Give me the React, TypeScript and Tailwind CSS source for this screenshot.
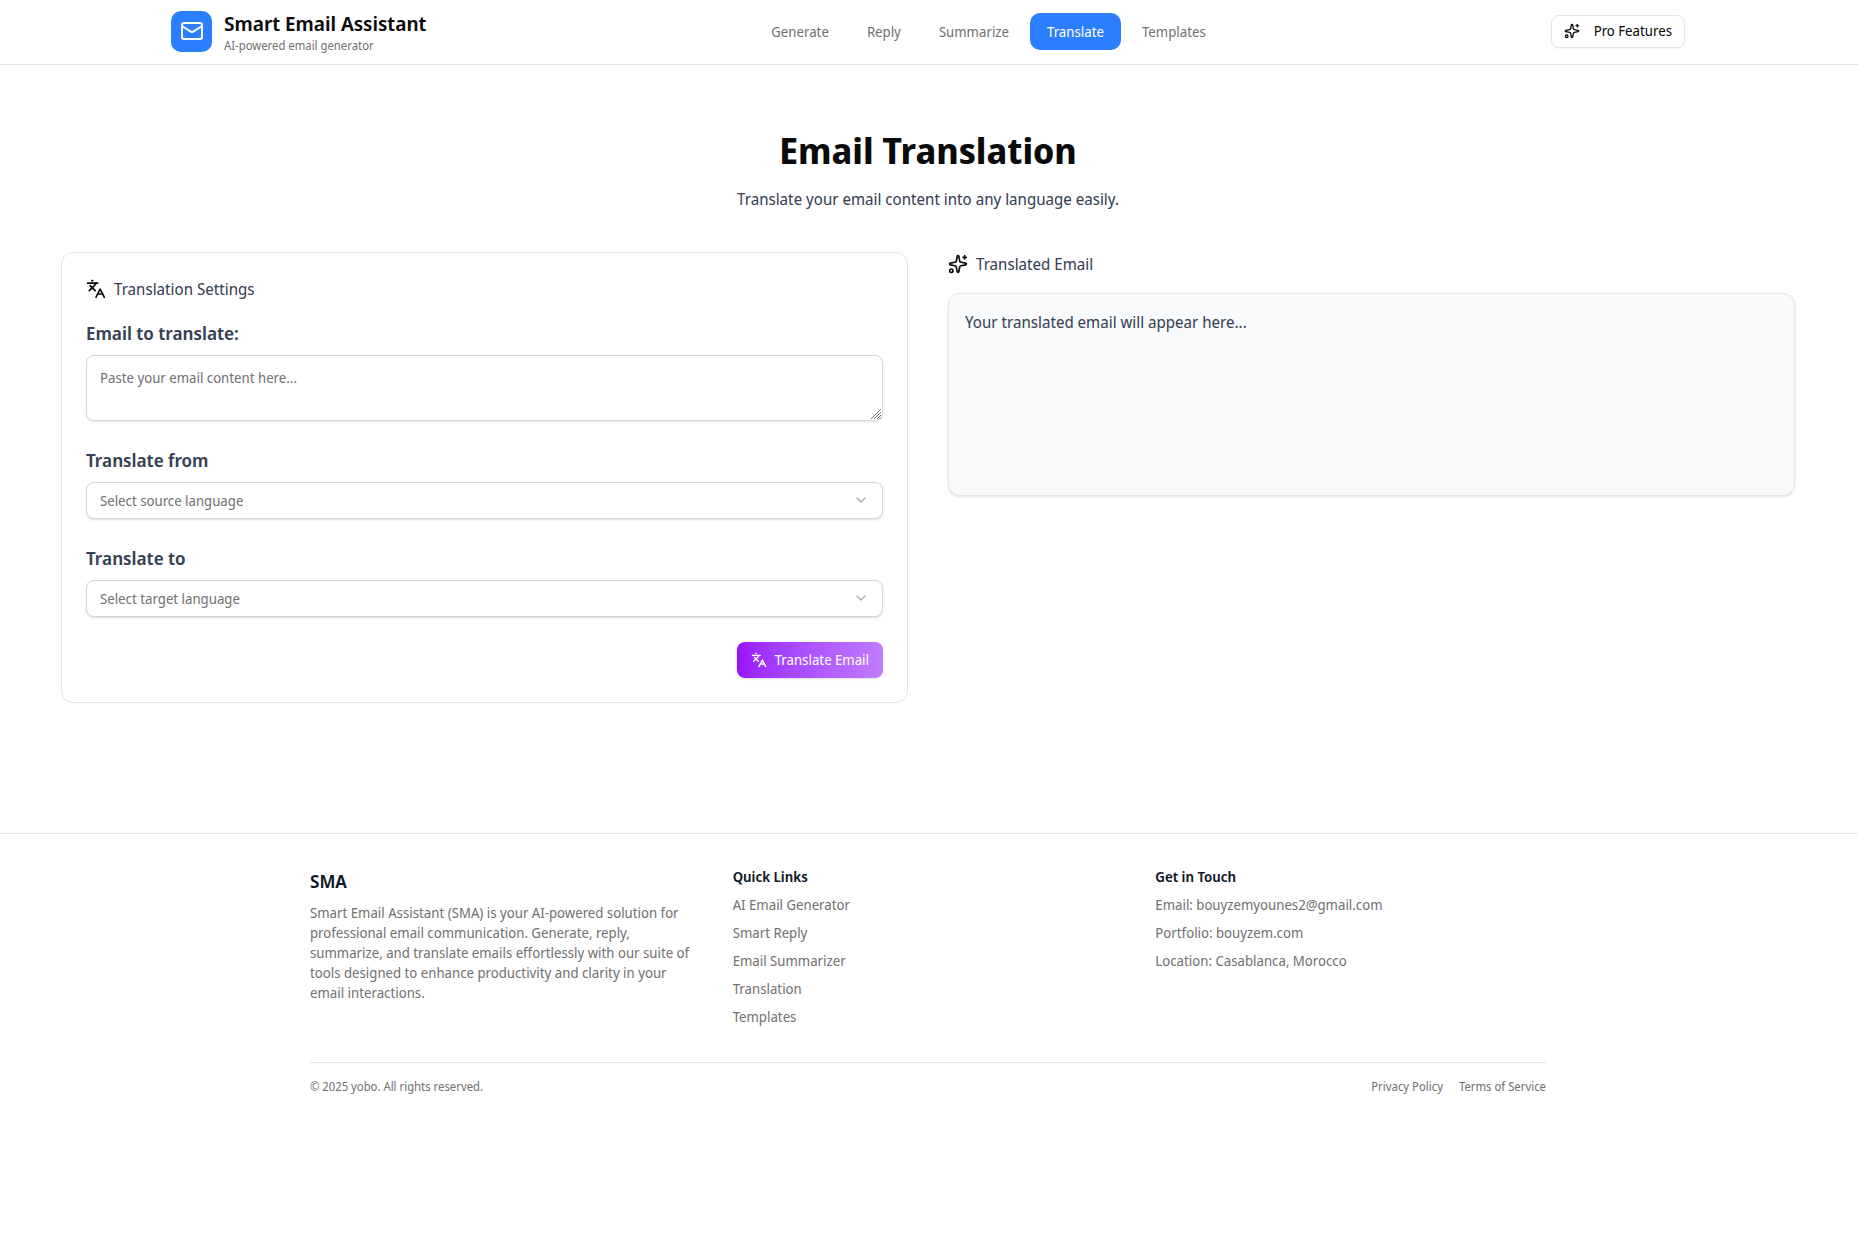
import { ChevronDown, Languages, Mail, Sparkles } from "lucide-react";

const tabs = ["Generate", "Reply", "Summarize", "Translate", "Templates"];
const quickLinks = ["AI Email Generator", "Smart Reply", "Email Summarizer", "Translation", "Templates"];
const contacts = ["Email: bouyzemyounes2@gmail.com", "Portfolio: bouyzem.com", "Location: Casablanca, Morocco"];
const languages = ["English", "French", "Spanish", "German", "Arabic"];

function LanguageSelect({ id, label, placeholder }: { id: string; label: string; placeholder: string }) {
  return (
    <div className="flex flex-col gap-2">
      <label htmlFor={id} className="text-lg/7 font-semibold text-gray-700">
        {label}
      </label>
      <div className="relative">
        <select
          id={id}
          defaultValue=""
          className="block h-[37px] w-full appearance-none rounded-lg border border-gray-300 bg-white px-[13px] text-sm text-neutral-500 shadow-sm"
        >
          <option value="" disabled>
            {placeholder}
          </option>
          {languages.map((language) => (
            <option key={language}>{language}</option>
          ))}
        </select>
        <ChevronDown className="pointer-events-none absolute top-2.5 right-3.5 size-4 text-neutral-500 opacity-60" />
      </div>
    </div>
  );
}

function ResizeGrip() {
  return (
    <svg
      viewBox="0 0 10 10"
      className="pointer-events-none absolute right-0.5 bottom-0.5 size-2.5 stroke-neutral-500"
      aria-hidden="true"
    >
      <path d="M0 10 10 0M3 10l7-7M6 10l4-4M8.5 10 10 8.5" strokeWidth="1" />
    </svg>
  );
}

function FooterColumn({ title, items }: { title: string; items: string[] }) {
  return (
    <div>
      <h4 className="text-sm/5 font-semibold text-gray-900">{title}</h4>
      <ul className="mt-2 flex flex-col gap-2">
        {items.map((item) => (
          <li key={item} className="text-sm/5">
            <a href="#">{item}</a>
          </li>
        ))}
      </ul>
    </div>
  );
}

export default function App() {
  return (
    <div className="min-h-screen bg-white font-['Noto_Sans_Display','Noto_Sans',sans-serif] text-neutral-950">
      <header className="border-b border-neutral-200 pr-0.5">
        <div className="mx-auto flex h-16 max-w-[1562px] items-center justify-between px-6 pb-0.5">
          <a href="#" className="flex items-center gap-3">
            <span className="flex size-[41px] items-center justify-center rounded-[10px] bg-[#2b7fff] text-white">
              <Mail className="size-6" />
            </span>
            <span className="flex flex-col pt-0.5">
              <span className="text-xl/7 font-semibold">Smart Email Assistant</span>
              <span className="text-xs/4 text-neutral-500">AI-powered email generator</span>
            </span>
          </a>
          <nav className="flex items-center gap-1">
            {tabs.map((tab) => (
              <button
                key={tab}
                type="button"
                className={
                  tab === "Translate"
                    ? "h-[37px] rounded-[10px] bg-[#2b7fff] px-[17px] pt-0.5 text-sm text-white"
                    : "h-[37px] rounded-[10px] px-[17px] pt-0.5 text-sm text-neutral-500"
                }
              >
                {tab}
              </button>
            ))}
          </nav>
          <button
            type="button"
            className="flex h-[33px] items-center gap-3.5 rounded-lg border border-neutral-200 px-3 text-sm shadow-xs"
          >
            <Sparkles className="size-4" />
            Pro Features
          </button>
        </div>
      </header>

      <main className="pt-16 pr-0.5 pb-[130px]">
        <div className="text-center">
          <h1 className="text-4xl/11 font-bold">Email Translation</h1>
          <p className="mt-3.5 text-base/6 text-gray-700">Translate your email content into any language easily.</p>
        </div>

        <div className="mt-[41px] grid grid-cols-2 items-start gap-10 px-[61px]">
          <section className="flex flex-col rounded-xl border border-neutral-200 p-6">
            <h2 className="flex items-center gap-2 text-base/6 text-gray-700">
              <Languages className="size-5 text-neutral-950" />
              Translation Settings
            </h2>
            <form className="mt-[18px] flex flex-col gap-[25px]">
              <div className="flex flex-col gap-2">
                <label htmlFor="email" className="text-lg/7 font-semibold text-gray-700">
                  Email to translate:
                </label>
                <div className="relative">
                  <textarea
                    id="email"
                    placeholder="Paste your email content here..."
                    className="block h-[66px] w-full resize-none rounded-lg border border-gray-300 px-[13px] py-3 text-sm/5 shadow-sm placeholder:text-neutral-500"
                  />
                  <ResizeGrip />
                </div>
              </div>
              <LanguageSelect id="source" label="Translate from" placeholder="Select source language" />
              <LanguageSelect id="target" label="Translate to" placeholder="Select target language" />
              <button
                type="button"
                className="flex h-9 items-center gap-2 self-end rounded-lg bg-linear-to-r from-purple-600 to-purple-400 px-3.5 text-sm text-white shadow-sm"
              >
                <Languages className="size-4" />
                Translate Email
              </button>
            </form>
          </section>

          <section className="flex flex-col gap-[17px]">
            <h2 className="flex items-center gap-2 text-base/6 text-gray-700">
              <Sparkles className="size-5 text-neutral-950" />
              Translated Email
            </h2>
            <div className="min-h-[203px] rounded-xl border border-gray-200 bg-gray-50 p-4 text-base/6 text-gray-700 shadow-sm">
              Your translated email will appear here...
            </div>
          </section>
        </div>
      </main>

      <footer className="border-t border-neutral-200 pr-0.5 text-neutral-500">
        <div className="mx-auto max-w-[1300px] px-8 pt-[33px]">
          <div className="grid grid-cols-3 gap-8">
            <div>
              <h3 className="text-lg/7 font-semibold text-gray-900">SMA</h3>
              <p className="mt-2 text-sm/5">
                Smart Email Assistant (SMA) is your AI-powered solution for professional email communication. Generate,
                reply, summarize, and translate emails effortlessly with our suite of tools designed to enhance
                productivity and clarity in your email interactions.
              </p>
            </div>
            <FooterColumn title="Quick Links" items={quickLinks} />
            <FooterColumn title="Get in Touch" items={contacts} />
          </div>
          <div className="mt-[35px] flex items-center justify-between border-t border-neutral-200 pt-4 text-xs/4">
            <p>© 2025 yobo. All rights reserved.</p>
            <div className="flex gap-4">
              <a href="#">Privacy Policy</a>
              <a href="#">Terms of Service</a>
            </div>
          </div>
        </div>
      </footer>
    </div>
  );
}
